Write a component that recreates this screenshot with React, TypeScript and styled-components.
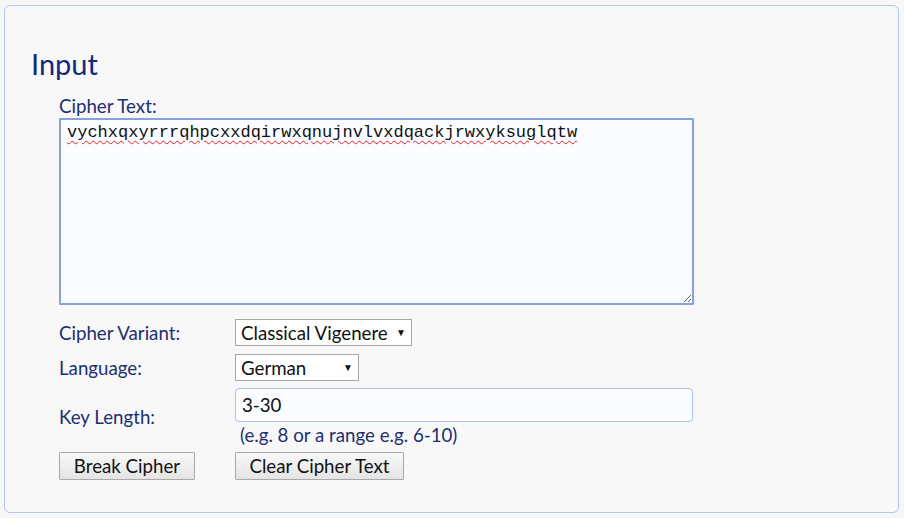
import React from "react";
import styled, { createGlobalStyle } from "styled-components";

const Global = createGlobalStyle`
  html, body { margin: 0; padding: 0; }
  body {
    background: #f7f7f7;
    font-family: Lato, "Noto Sans", sans-serif;
  }
`;

const Page = styled.div`
  width: 904px;
  height: 518px;
  box-sizing: border-box;
  padding: 5px 5px 5px 4px;
`;

const Panel = styled.section`
  box-sizing: border-box;
  height: 508px;
  border: 1px solid #b3c6ee;
  border-radius: 6px;
  background: #f8f8f9;
  padding: 41px 0 0 26px;
`;

const Title = styled.h2`
  margin: 0;
  font-family: Lato, sans-serif;
  font-weight: 400;
  font-size: 29px;
  line-height: 34px;
  color: #0f2b7c;
`;

const Form = styled.div`
  margin: 14px 0 0 28px;
  display: flex;
  flex-direction: column;
`;

const Row = styled.div<{ $mt: number }>`
  display: flex;
  align-items: center;
  margin-top: ${(p) => p.$mt}px;
`;

const Label = styled.label`
  width: 176px;
  flex: none;
  font-size: 18.7px;
  color: #1d2f6f;
`;

const TopLabel = styled.label`
  font-size: 18.7px;
  line-height: 22px;
  color: #1d2f6f;
  margin-bottom: 1px;
`;

const CipherArea = styled.textarea`
  box-sizing: border-box;
  width: 635px;
  height: 187px;
  margin: 0;
  padding: 3px 6px;
  border: 2px solid #87a2d6;
  border-radius: 1px;
  background: #fbfcff;
  font-family: "Liberation Mono", "Courier New", monospace;
  font-size: 17px;
  line-height: 20px;
  color: #111;
  text-decoration: underline wavy #e02020;
  text-decoration-thickness: 1px;
  text-underline-offset: 3px;
  outline: none;
  resize: both;
`;

const SelectWrap = styled.div<{ $w: number }>`
  position: relative;
  width: ${(p) => p.$w}px;
  height: 27px;
`;

const Select = styled.select`
  appearance: none;
  box-sizing: border-box;
  width: 100%;
  height: 100%;
  border: 1px solid #a6a6a6;
  border-radius: 0;
  background: #ffffff;
  padding: 0 0 0 5px;
  font-family: Lato, "Noto Sans", sans-serif;
  font-size: 18.7px;
  color: #111;
`;

const Arrow = styled.span`
  position: absolute;
  right: 6px;
  top: 7px;
  font-size: 10px;
  color: #111;
  pointer-events: none;
`;

const KeyCell = styled.div`
  display: flex;
  flex-direction: column;
`;

const KeyInput = styled.input`
  box-sizing: border-box;
  width: 458px;
  height: 34px;
  border: 1px solid #aac0ef;
  border-radius: 4px;
  background: #fbfcff;
  padding: 0 6px;
  font-family: Lato, "Noto Sans", sans-serif;
  font-size: 18.7px;
  color: #111;
  outline: none;
`;

const Hint = styled.div`
  margin: 2px 0 0 5px;
  font-size: 18.7px;
  line-height: 22px;
  color: #1d2f6f;
`;

const ButtonCell = styled.div`
  width: 176px;
  flex: none;
`;

const Button = styled.button<{ $w: number }>`
  width: ${(p) => p.$w}px;
  height: 28px;
  box-sizing: border-box;
  border: 1px solid #a9a9a9;
  border-radius: 1px;
  background: linear-gradient(#f8f8f8, #e4e4e4);
  font-family: Lato, "Noto Sans", sans-serif;
  font-size: 18.7px;
  color: #111;
  padding: 0;
`;

export default function App() {
  return (
    <>
      <Global />
      <Page>
        <Panel>
          <Title>Input</Title>
          <Form>
            <TopLabel>Cipher Text:</TopLabel>
            <CipherArea
              spellCheck={false}
              defaultValue="vychxqxyrrrqhpcxxdqirwxqnujnvlvxdqackjrwxyksuglqtw"
            />
            <Row $mt={14}>
              <Label>Cipher Variant:</Label>
              <SelectWrap $w={177}>
                <Select defaultValue="classical">
                  <option value="classical">Classical Vigenere</option>
                </Select>
                <Arrow>▼</Arrow>
              </SelectWrap>
            </Row>
            <Row $mt={8}>
              <Label>Language:</Label>
              <SelectWrap $w={124}>
                <Select defaultValue="de">
                  <option value="de">German</option>
                </Select>
                <Arrow>▼</Arrow>
              </SelectWrap>
            </Row>
            <Row $mt={7}>
              <Label>Key Length:</Label>
              <KeyCell>
                <KeyInput defaultValue="3-30" />
                <Hint>(e.g. 8 or a range e.g. 6-10)</Hint>
              </KeyCell>
            </Row>
            <Row $mt={6}>
              <ButtonCell>
                <Button $w={136}>Break Cipher</Button>
              </ButtonCell>
              <Button $w={169}>Clear Cipher Text</Button>
            </Row>
          </Form>
        </Panel>
      </Page>
    </>
  );
}
